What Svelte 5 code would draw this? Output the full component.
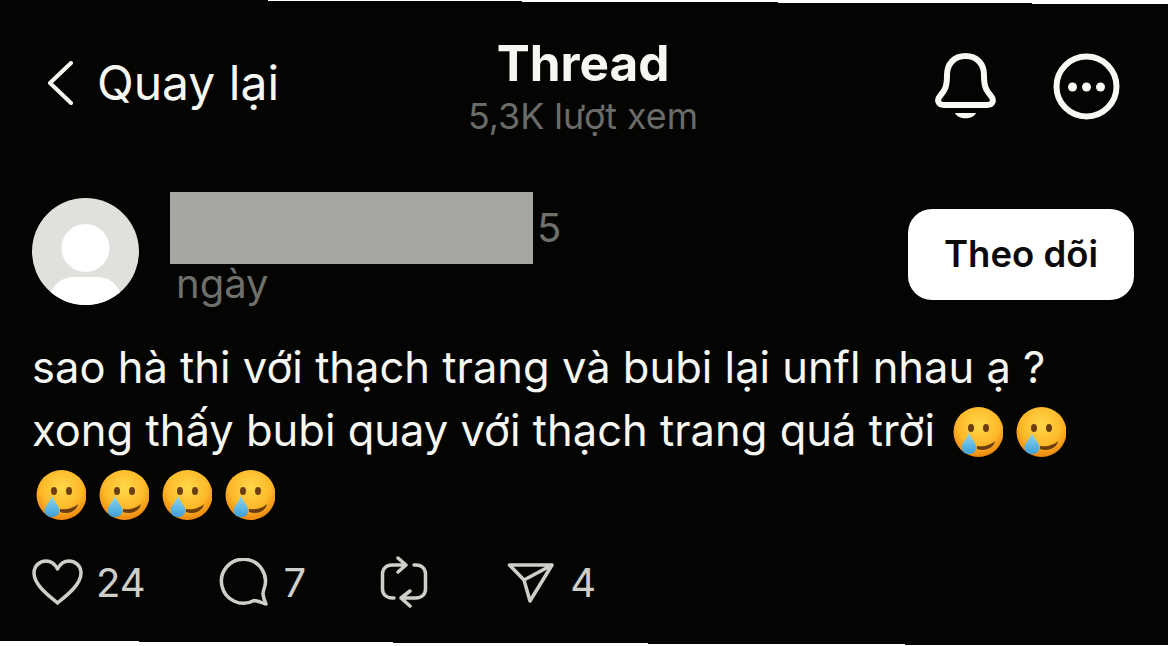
<script>
	// the screenshot is slightly tilted, so white page shows at top and bottom edges
	const topSteps = [
		{ from: 268, to: 522, h: 1 },
		{ from: 522, to: 778, h: 2 },
		{ from: 778, to: 1032, h: 3 },
		{ from: 1032, to: 1168, h: 4 }
	]
	const bottomSteps = [
		{ from: 0, to: 139, h: 5 },
		{ from: 139, to: 393, h: 4 },
		{ from: 393, to: 648, h: 3 },
		{ from: 648, to: 905, h: 2 },
		{ from: 905, to: 1168, h: 1 }
	]
	const firstLineEmoji = [0, 1]
	const lastLineEmoji = [0, 1, 2, 3]
</script>

<svg class="defs" width="0" height="0" aria-hidden="true">
	<defs>
		<radialGradient id="face" cx="50%" cy="36%" r="62%">
			<stop offset="0" stop-color="#ffd84a" />
			<stop offset="0.65" stop-color="#fdb92a" />
			<stop offset="1" stop-color="#ee8a10" />
		</radialGradient>
		<linearGradient id="tear" x1="0" y1="0" x2="0" y2="1">
			<stop offset="0" stop-color="#8fd8ee" />
			<stop offset="1" stop-color="#3f9fd8" />
		</linearGradient>
		<symbol id="smile-tear" viewBox="0 0 52 52">
			<circle cx="27.5" cy="25" r="25" fill="url(#face)" />
			<ellipse cx="20" cy="21" rx="3" ry="4" fill="#6b3d10" />
			<ellipse cx="35" cy="21" rx="3" ry="4" fill="#6b3d10" />
			<path d="M26 39 C33 40 40 38 44 34 C43 41 34 45 26 42 Z" fill="#6b3d10" />
			<path d="M18 26 C20 32 25.5 36 25.5 40.5 C25.5 44.5 22 47 18 47 C14 47 10.5 44.5 10.5 40.5 C10.5 36 16 32 18 26 Z" fill="url(#tear)" />
		</symbol>
	</defs>
</svg>

<main class="page">
	{#each topSteps as s}
		<i class="edge top" style={`left:${s.from}px;width:${s.to - s.from}px;height:${s.h}px`}></i>
	{/each}
	{#each bottomSteps as s}
		<i class="edge bottom" style={`left:${s.from}px;width:${s.to - s.from}px;height:${s.h}px`}></i>
	{/each}

	<header class="topbar">
		<div class="back">
			<svg width="26" height="44" viewBox="0 0 26 44">
				<path d="M24 2 L3 22 L24 42" fill="none" stroke="#f4f4f0" stroke-width="4" stroke-linecap="round" stroke-linejoin="round" />
			</svg>
			<span>Quay lại</span>
		</div>
		<div class="title">
			<h1>Thread</h1>
			<p>5,3K lượt xem</p>
		</div>
		<div class="actions">
			<svg width="61" height="67" viewBox="0 0 61 67">
				<path d="M30.5 3 C19 3 12 11 12 22 C12 34 10 37 5 43 C1.5 47 3 52 9 52 H52 C58 52 59.5 47 56 43 C51 37 49 34 49 22 C49 11 42 3 30.5 3 Z" fill="none" stroke="#f8f8f4" stroke-width="6" />
				<path d="M20 60 H41 C38 67 23 67 20 60 Z" fill="#f8f8f4" />
			</svg>
			<svg width="67" height="67" viewBox="0 0 67 67">
				<circle cx="33.5" cy="33.5" r="30" fill="none" stroke="#f8f8f4" stroke-width="6" />
				<circle cx="19.5" cy="34" r="4.5" fill="#f8f8f4" />
				<circle cx="33.5" cy="34" r="4.5" fill="#f8f8f4" />
				<circle cx="47.5" cy="34" r="4.5" fill="#f8f8f4" />
			</svg>
		</div>
	</header>

	<section class="author">
		<svg class="avatar" width="107" height="107" viewBox="0 0 107 107">
			<defs>
				<clipPath id="avatar-clip"><circle cx="53.5" cy="53.5" r="53.5" /></clipPath>
			</defs>
			<g clip-path="url(#avatar-clip)">
				<rect width="107" height="107" fill="#dfe1dc" />
				<circle cx="53.5" cy="50" r="24" fill="#fff" />
				<path d="M18 96 C22 86 30 79 42 79 H65 C77 79 85 86 89 96 L72 112 H35 Z" fill="#fff" />
			</g>
		</svg>
		<div class="who">
			<div class="name">
				<div class="redacted"></div>
				<span>5</span>
			</div>
			<span class="age">ngày</span>
		</div>
		<button class="follow">Theo dõi</button>
	</section>

	<p class="post">
		sao hà thi với thạch trang và bubi lại unfl nhau ạ ?<br />
		xong thấy bubi quay với thạch trang quá trời
		<span class="emoji-run">
			{#each firstLineEmoji as _}
				<svg class="emoji" viewBox="0 0 52 52"><use href="#smile-tear" /></svg>
			{/each}
		</span>
		<br />
		<span class="emoji-row">
			{#each lastLineEmoji as _}
				<svg class="emoji" viewBox="0 0 52 52"><use href="#smile-tear" /></svg>
			{/each}
		</span>
	</p>

	<footer class="stats">
		<div class="stat likes">
			<svg width="51" height="47" viewBox="0 0 51 47">
				<path d="M25.5 44 C20 39 2 27 2 14 C2 7 7.5 2 14 2 C19 2 23 5 25.5 10 C28 5 32 2 37 2 C43.5 2 49 7 49 14 C49 27 31 39 25.5 44 Z" />
			</svg>
			<span>24</span>
		</div>
		<div class="stat replies">
			<svg width="49" height="48" viewBox="0 0 49 48">
				<path d="M35 42.5 A22 22 0 1 1 45 31 C43.5 35 43.5 38 47 46 C42 44.5 38 42.5 35 42.5 Z" />
			</svg>
			<span>7</span>
		</div>
		<div class="stat reposts">
			<svg width="48" height="52" viewBox="0 0 48 52">
				<path d="M14 42 H12 C6 42 2.5 38 2.5 33 V18 C2.5 13 6 9 12 9 H26 M18 2 L26 9 L18 16" />
				<path d="M34 9 H36 C42 9 45.5 13 45.5 18 V33 C45.5 38 42 42 36 42 H21 M30 35 L21 42 L30 50" />
			</svg>
		</div>
		<div class="stat shares">
			<svg width="47" height="42" viewBox="0 0 47 42">
				<path d="M2.5 4 H45 L23 40 L17 19 Z M45 4 L17 19" />
			</svg>
			<span>4</span>
		</div>
	</footer>
</main>

<style>
:global(body) {
	background: #040502;
}

.defs {
	position: absolute;
}

.page {
	position: relative;
	width: 1168px;
	height: 646px;
	box-sizing: border-box;
	padding: 53px 34px 0 32px;
	overflow: hidden;
	background: #040502;
	color: #f6f6f2;
	font-family: Inter, "Noto Sans", sans-serif;
}

.edge {
	position: absolute;
	background: #fff;
}

.edge.top {
	top: 0;
}

.edge.bottom {
	bottom: 0;
}

.topbar {
	display: grid;
	grid-template-columns: 1fr auto 1fr;
	height: 90px;
}

.back {
	display: flex;
	align-items: center;
	gap: 24px;
	padding: 0 0 31px 15px;
	font-size: 48px;
}

.back svg {
	flex: none;
}

.title {
	text-align: center;
	margin-top: -18px;
}

.title h1 {
	margin: 0;
	font-size: 49.5px;
	font-weight: 700;
	line-height: 56px;
}

.title p {
	margin: 0;
	font-size: 35.8px;
	line-height: 40px;
	color: #6b6c69;
	padding-top: 5px;
}

.actions {
	display: flex;
	justify-content: flex-end;
	align-items: flex-start;
	gap: 57px;
	padding-right: 14px;
}

.author {
	display: flex;
	align-items: flex-start;
	margin-top: 49px;
}

.avatar {
	flex: none;
	margin-top: 6px;
}

.who {
	margin-left: 31px;
	flex: 1;
	color: #6f706c;
	font-size: 40px;
}

.name {
	display: flex;
	align-items: center;
	height: 72px;
	gap: 4px;
}

.name span {
	padding-bottom: 2px;
}

.redacted {
	width: 363px;
	height: 72px;
	background: #a5a8a1;
}

.age {
	display: block;
	margin: -2px 0 0 6px;
	line-height: 44px;
}

.follow {
	width: 226px;
	height: 91px;
	margin-top: 17px;
	padding-bottom: 3px;
	border: 0;
	border-radius: 24px;
	background: #fff;
	color: #0a0a0a;
	font: 600 36.5px Inter, "Noto Sans", sans-serif;
}

.post {
	margin: 30px 0 0;
	font-size: 43.5px;
	line-height: 63px;
}

.emoji-run {
	margin-left: 4px;
}

.emoji-row {
	margin-left: 2px;
}

.emoji {
	width: 52px;
	height: 52px;
	vertical-align: -13px;
	margin-right: 11px;
}

.stats {
	display: flex;
	align-items: center;
	margin-top: 31px;
	color: #cfcfca;
	font-size: 40px;
}

.stat {
	display: flex;
	align-items: center;
	gap: 13px;
}

.stat svg {
	fill: none;
	stroke: #cfcfca;
	stroke-width: 3.5;
	stroke-linejoin: round;
	stroke-linecap: round;
}

.replies {
	margin-left: 73px;
	gap: 16px;
}

.reposts {
	margin-left: 74px;
}

.shares {
	margin-left: 79px;
	gap: 16px;
}
</style>
